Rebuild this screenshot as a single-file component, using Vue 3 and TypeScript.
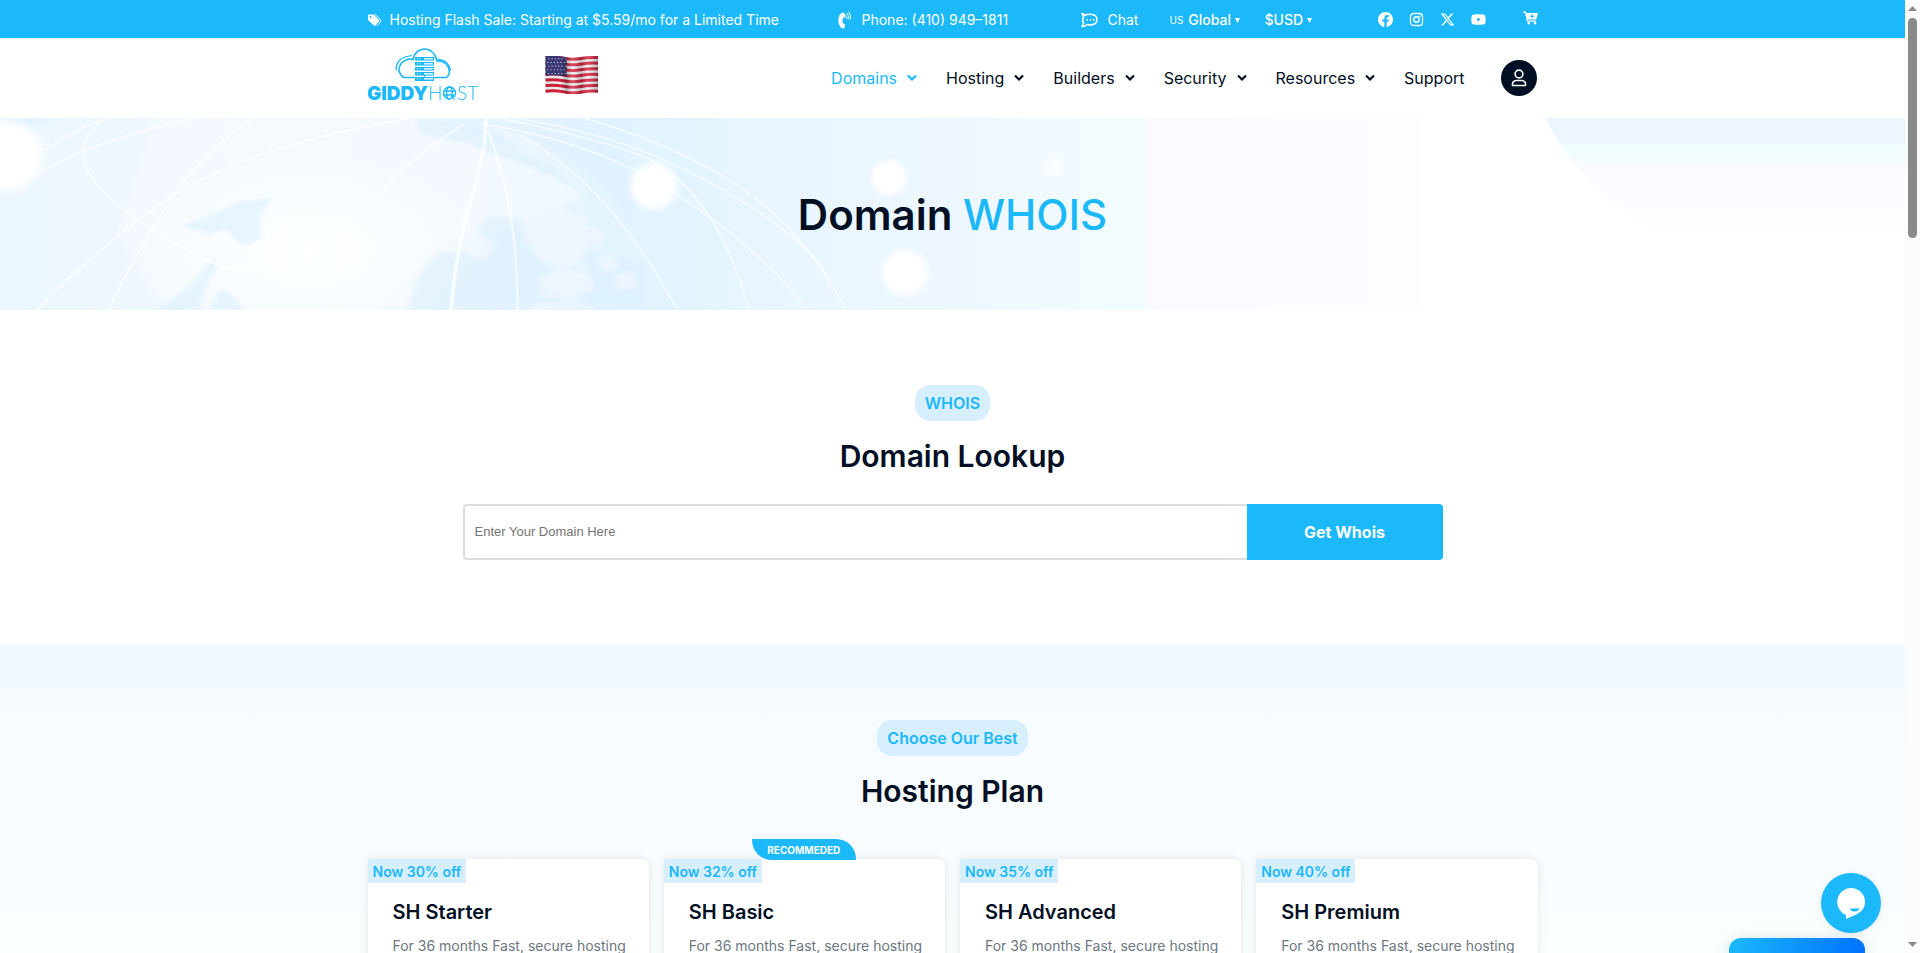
<script setup lang="ts">
import { ref } from 'vue'

interface NavItem { label: string; menu: boolean; active?: boolean }
interface Plan { name: string; off: string; best?: boolean }

const nav: NavItem[] = [
  { label: 'Domains', menu: true, active: true },
  { label: 'Hosting', menu: true },
  { label: 'Builders', menu: true },
  { label: 'Security', menu: true },
  { label: 'Resources', menu: true },
  { label: 'Support', menu: false },
]

const plans: Plan[] = [
  { name: 'SH Starter', off: 'Now 30% off' },
  { name: 'SH Basic', off: 'Now 32% off', best: true },
  { name: 'SH Advanced', off: 'Now 35% off' },
  { name: 'SH Premium', off: 'Now 40% off' },
]

const region = ref('Global')
const currency = ref('$USD')
const domain = ref('')
</script>

<template>
  <div class="shell">
    <div class="page">
      <div class="topbar">
        <div class="container topbar-grid">
          <a class="item sale" href="#sale">
            <svg width="14" height="14" viewBox="0 0 28 28" aria-hidden="true">
              <path fill="#fff" fill-rule="evenodd" d="M1 3h10l11 11q1.500 1.500 0 3l-7 8q-1.500 1.500-3 0L0 14V4zM5 6a2 2 0 1 0 .1 0z" />
              <path d="M14 3l11.500 11q1.500 1.500 0 3L19 24.500" fill="none" stroke="#fff" stroke-width="2" stroke-linecap="round" />
            </svg>
            Hosting Flash Sale: Starting at $5.59/mo for a Limited Time
          </a>
          <a class="item phone" href="tel:+14109491811">
            <svg width="14" height="18" viewBox="0 0 28 36" fill="none" stroke="#fff" aria-hidden="true">
              <path fill="#fff" stroke="none" d="M9 3l4 1 1 8-4 2q-2 6 0 11l4 1-1 8-4 1q-5-2-7.500-9.500-2.500-10 2-18.500z" />
              <path stroke-width="2" stroke-linecap="round" d="M15 8q3 2.500 1 6M18.500 5q4.500 4.500 1.500 10.500M22 2q6 6.500 2 15" />
            </svg>
            Phone: (410) 949–1811
          </a>
          <a class="item chat" href="#chat">
            <svg width="17" height="17" viewBox="0 0 34 34" fill="none" stroke="#fff" aria-hidden="true">
              <path stroke-width="3" stroke-linejoin="round" d="M2 3q3 1 5 4Q12 4 19 4.500q13 1 13 10.500 0 10-13 11-4 0-7-1-4 4-10 4.500Q5 25 5 21q-3-5 0-10Q4 7 2 3z" />
              <path stroke-width="3.500" stroke-linecap="round" d="M12.500 15.500h.1M19 15.500h.1M25.500 15.500h.1" />
            </svg>
            Chat
          </a>
          <label class="pick">
            <span class="code">US</span>
            <select v-model="region" aria-label="Region"><option>Global</option></select>
            <svg width="5" height="5" viewBox="0 0 5 5" aria-hidden="true"><path fill="#fff" d="M0 0h5L2.500 5z" /></svg>
          </label>
          <label class="pick">
            <select v-model="currency" aria-label="Currency"><option>$USD</option></select>
            <svg width="5" height="5" viewBox="0 0 5 5" aria-hidden="true"><path fill="#fff" d="M0 0h5L2.500 5z" /></svg>
          </label>
          <div class="social">
            <a href="#facebook" aria-label="Facebook">
              <svg width="15" height="15" viewBox="0 0 16 16"><path fill="#fff" d="M16 8.049c0-4.446-3.582-8.050-8-8.050C3.580 0-.002 3.603-.002 8.050c0 4.017 2.926 7.347 6.750 7.951v-5.625h-2.030V8.050H6.750V6.275c0-2.017 1.195-3.131 3.022-3.131.876 0 1.791.157 1.791.157v1.980h-1.009c-.993 0-1.303.621-1.303 1.258v1.510h2.218l-.354 2.326H9.250V16c3.824-.604 6.750-3.934 6.750-7.951" /></svg>
            </a>
            <a href="#instagram" aria-label="Instagram">
              <svg width="15" height="15" viewBox="0 0 30 30" fill="none" stroke="#fff" stroke-width="2.600"><rect x="3" y="3" width="24" height="24" rx="6.500" /><circle cx="15" cy="15" r="5.500" /><circle cx="21.600" cy="8.600" r="1.400" fill="#fff" stroke="none" /></svg>
            </a>
            <a href="#x" aria-label="X">
              <svg width="15" height="15" viewBox="0 0 512 512"><path fill="#fff" d="M389.200 48h70.600L305.600 224.200 487 464H345L233.700 318.600 106.500 464H35.800L200.700 275.500 26.800 48H172.400L272.900 180.900 389.200 48zM364.400 421.800h39.100L151.100 88h-42L364.400 421.800z" /></svg>
            </a>
            <a href="#youtube" aria-label="YouTube">
              <svg width="15" height="15" viewBox="0 0 30 30"><path fill="#fff" fill-rule="evenodd" d="M5 5q10-1.500 20 0 4 .5 4 4.500.6 5.500 0 11 0 4-4 4.500-10 1-20 0-4-.5-4-4.500-.6-5.500 0-11Q1 5.500 5 5zM12.500 11v8l7-4z" /></svg>
            </a>
          </div>
          <a class="cart" href="#cart" aria-label="Cart">
            <svg width="15" height="14" viewBox="0 0 30 28">
              <path d="M0 2h5l4 18h17" fill="none" stroke="#fff" stroke-width="2.500" />
              <path fill="#fff" fill-rule="evenodd" d="M6.500 4H30l-3.500 13H9zM17 6v3.500h-3.500v2H17V15h2v-3.500h3.500v-2H19V6z" />
              <circle cx="11.500" cy="24.500" r="2.500" fill="#fff" /><circle cx="24" cy="24.500" r="2.500" fill="#fff" />
            </svg>
          </a>
        </div>
      </div>

      <header class="container header">
        <a class="logo" href="#home" aria-label="GiddyHost">
          <svg width="112" height="60" viewBox="0 0 112 60">
            <g fill="none" stroke="#1bb8fa" stroke-width="1.600">
              <path d="M47 29.500H36q-4-2-5-7 0-7 6-10 4-2 8-1Q47 2 56 1q10 0 13 12 6-1 10 4 3 4 2 9-1 3-3 3.500H66" />
              <path d="M28 22.500q0-12 11-14l5-1M69.500 11q12 1 13 12" stroke-width="1.200" />
              <path d="M56.500 26v5.500M47 32.500h19" stroke-width="1" />
            </g>
            <g v-for="n in 5" :key="n" :transform="`translate(47 ${n * 5 + 4})`">
              <rect width="19" height="3.600" fill="#1bb8fa" />
              <rect x="9" y="1" width="9" height="1.600" fill="#d9f1fe" />
              <circle cx="2.500" cy="1.800" r=".6" fill="#fff" /><circle cx="5" cy="1.800" r=".6" fill="#fff" />
            </g>
            <text class="logo-heavy" x="-1" y="52">GIDDY</text>
            <text class="logo-light" x="60" y="52">H</text>
            <text class="logo-light" x="89" y="52">ST</text>
            <g fill="none" stroke="#1bb8fa" stroke-width="1.300">
              <circle cx="81.500" cy="45" r="6" /><ellipse cx="81.500" cy="45" rx="2.800" ry="6" /><path d="M75.500 43h12M75.500 47h12" />
            </g>
            <path d="M82 44.500l6.500 4-2.700.8 1.600 2.700-1.500.4-1.400-2.400-1.800 1.600z" fill="#1bb8fa" stroke="#fff" stroke-width=".5" />
          </svg>
        </a>
        <svg class="flag" width="54" height="38" viewBox="0 0 54 38" role="img" aria-label="United States">
          <defs>
            <linearGradient id="fold" x2="1">
              <stop offset="0" stop-color="#000" stop-opacity=".08" />
              <stop offset=".28" stop-color="#000" stop-opacity="0" />
              <stop offset=".4" stop-color="#000" stop-opacity=".25" />
              <stop offset=".52" stop-color="#fff" stop-opacity=".2" />
              <stop offset=".68" stop-color="#000" stop-opacity=".2" />
              <stop offset=".8" stop-color="#fff" stop-opacity=".15" />
              <stop offset="1" stop-color="#000" stop-opacity=".28" />
            </linearGradient>
          </defs>
          <path fill="#f2f2f4" d="M.5 1q9-1 18 .5t17 .5 17.500-1L53 36q-8-1.500-16 .5t-18 0-18.500 0z" />
          <path v-for="n in 7" :key="n" :transform="`translate(0 ${n * 5.600 - 4})`" d="M.5 0q9-1 18 .7t17 .3 17.500-1" fill="none" stroke="#d5213c" stroke-width="3" />
          <path fill="#3c3b78" d="M.5 0q10-1 21 1.500v19q-11-2-21-1z" />
          <g fill="#fff">
            <template v-for="r in 5" :key="r">
              <circle v-for="c in 6" :key="c" :cx="c * 3.300 - 0.500 + (r % 2)" :cy="r * 3.700 - 1" r=".55" />
            </template>
          </g>
          <path fill="url(#fold)" d="M.5 0q9-1 18 .5t17 .5 17.500-1L53 37q-8-1.500-16 .5t-18 0-18.500 0z" />
        </svg>
        <nav class="nav" aria-label="Main">
          <a v-for="item in nav" :key="item.label" :href="'#' + item.label.toLowerCase()" :class="{ active: item.active }">
            {{ item.label }}
            <svg v-if="item.menu" width="10" height="8" viewBox="0 0 10 8" aria-hidden="true"><path d="M1 1.500l4 4 4-4" fill="none" stroke="currentColor" stroke-width="2.200" /></svg>
          </a>
        </nav>
        <a class="account" href="#account" aria-label="Account">
          <svg width="16" height="18" viewBox="0 0 16 18" fill="none" stroke="#fff" stroke-width="1.600" stroke-linejoin="round"><circle cx="8" cy="5" r="3.900" /><path d="M1.500 16.500q-.5-4.800 4-5h5q4.500.2 4 5z" /></svg>
        </a>
      </header>

      <section class="hero">
        <svg class="hero-art" viewBox="0 0 1905 192" preserveAspectRatio="none" aria-hidden="true">
          <defs>
            <linearGradient id="sky" x2="1">
              <stop offset="0" stop-color="#ebf6fe" /><stop offset=".06" stop-color="#eff7fe" />
              <stop offset=".15" stop-color="#f2f9fe" />
              <stop offset=".25" stop-color="#eff7fe" /><stop offset=".32" stop-color="#e3f4ff" />
              <stop offset=".36" stop-color="#e2f4ff" /><stop offset=".4" stop-color="#e8f5ff" />
              <stop offset=".5" stop-color="#eef7ff" /><stop offset=".58" stop-color="#f2fbfd" />
              <stop offset=".6" stop-color="#f3fcfd" /><stop offset=".602" stop-color="#f8faff" />
              <stop offset=".66" stop-color="#fbfcff" /><stop offset=".745" stop-color="#fcfdff" />
              <stop offset=".747" stop-color="#fff" />
            </linearGradient>
            <linearGradient id="corner" x2="0" y2="1">
              <stop offset="0" stop-color="#edf5fe" /><stop offset=".22" stop-color="#edf6fe" />
              <stop offset=".26" stop-color="#f0fcfd" /><stop offset=".38" stop-color="#f2fcfd" />
              <stop offset=".42" stop-color="#f8faff" /><stop offset=".54" stop-color="#fbfcff" />
              <stop offset="1" stop-color="#fcfdff" />
            </linearGradient>
            <radialGradient id="glow"><stop offset=".65" stop-color="#fff" /><stop offset="1" stop-color="#fff" stop-opacity="0" /></radialGradient>
            <radialGradient id="haze"><stop offset="0" stop-color="#fff" /><stop offset=".4" stop-color="#fbfeff" stop-opacity=".9" /><stop offset="1" stop-color="#f9fdff" stop-opacity="0" /></radialGradient>
            <filter id="soft"><feGaussianBlur stdDeviation="5" /></filter>
          </defs>
          <rect width="1905" height="192" fill="url(#sky)" />
          <g transform="scale(.40816 .33333) translate(0 -24)">
            <path d="M1150 24q300 110 400 330V24z" fill="#dff2ff" opacity=".6" filter="url(#soft)" />
            <path d="M380 24H1020l260 90 150 150-120 60-330 120-50 155H560l-180-40-90-190z" fill="#f6fbfe" opacity=".6" filter="url(#soft)" />
            <ellipse cx="760" cy="420" rx="440" ry="300" fill="url(#haze)" />
            <g fill="#dbf0ff" opacity=".6" filter="url(#soft)">
              <path d="M1020 30H1180l110 100q70 40 120 110-60-50-150-85-60-20-110-55l-60-10-60-20z" />
              <path d="M445 350l70-35 70-40 85-12-30 50-5 40 10 30-50 28-40-50-40 10z" />
              <path d="M385 600l50-45q40-30 55-65l35-50 5 40-30 60-10 60z" />
              <path d="M515 600l20-60 25 5 45 55z" />
              <path d="M1000 600l15-70q20-70 70-105l55 5 45 20 30-45-45-40 20-45h80l35 80q10 60 60 80l55 5-80 20-20 50 90 25 40-80-15-80 150 40V600z" />
              <path d="M0 24h130L80 50H40z" />
            </g>
            <g fill="#f0f7fe" opacity=".8" filter="url(#soft)">
              <path d="M1290 320l50-40 90 40 20 80-50 70-70-20-45-60zM1320 500l70-25 60 30 5 40-70 10-60-20zM1460 450l40-20 20 40-40 20zM1430 340l50 30-10 40-30-10zM1290 600l40-25 110 5 20 20zM1500 500l50-20 15 50-50 10z" />
            </g>
            <g fill="none" stroke="#fff" stroke-opacity=".7" stroke-width="5">
              <path d="M260 24Q180 90 215 185 270 290 420 395T620 485" />
              <path d="M110 120Q180 60 250 30M85 195Q230 90 480 24" />
              <path d="M620 24Q510 110 430 250T265 600" />
              <path d="M90 600Q250 400 430 250 640 100 1000 26" />
              <path d="M1190 24q0 110-35 240t-50 336" stroke-width="9" />
              <path d="M1195 60q75 240 73 540" />
              <path d="M940 240Q1020 130 1140 40" />
              <path d="M1170 40Q1450 90 1640 240 1850 400 1980 600" stroke-width="4" />
              <path d="M1270 70Q1450 200 1570 420 1620 510 1660 600" stroke-width="4" />
              <path d="M1220 24Q1450 80 1590 145 1760 260 1835 600" stroke-width="4" />
              <path d="M1430 24Q1760 140 1920 340 2030 480 2070 600" stroke-width="4" />
              <path d="M1280 28Q1560 80 1800 260T2030 540" stroke-width="4" />
            </g>
          </g>
          <g fill="url(#glow)">
            <ellipse cx="8" cy="38" rx="42" ry="42" /><circle cx="654" cy="68" r="28" />
            <ellipse cx="889" cy="60" rx="21" ry="21" /><circle cx="905" cy="155" r="27" />
          </g>
          <circle cx="1054" cy="49" r="16" fill="url(#haze)" opacity=".7" /><circle cx="311" cy="133" r="34" fill="url(#haze)" />
          <path d="M1546 0H1905V109H1652Q1577 70 1546 0z" fill="url(#corner)" />
        </svg>
        <h1>Domain <span>WHOIS</span></h1>
      </section>

      <section class="lookup">
        <p class="pill">WHOIS</p>
        <h2>Domain Lookup</h2>
        <form class="search" @submit.prevent>
          <input v-model="domain" type="text" placeholder="Enter Your Domain Here" aria-label="Domain name">
          <button type="submit">Get Whois</button>
        </form>
      </section>

      <section class="plans">
        <p class="pill">Choose Our Best</p>
        <h2>Hosting Plan</h2>
        <div class="container cards">
          <article v-for="plan in plans" :key="plan.name" class="card">
            <span v-if="plan.best" class="ribbon">RECOMMEDED</span>
            <span class="off">{{ plan.off }}</span>
            <h3>{{ plan.name }}</h3>
            <p>For 36 months Fast, secure hosting</p>
          </article>
        </div>
      </section>

      <button class="widget" type="button" aria-label="Open chat">
        <svg width="28" height="31" viewBox="0 0 28 31"><path fill="#fff" d="M14 0a14 14 0 0 1 14 14c0 7-5 11-10 13l-9 4v-4A14 14 0 0 1 14 0z" /><path d="M13 20.500h9.500q-1 3-5 3t-4.500-3z" fill="#1bb8fa" /></svg>
      </button>
      <div class="promo"></div>
    </div>

    <div class="scroll" aria-hidden="true">
      <svg width="9" height="5" viewBox="0 0 9 5"><path fill="#8a8a8a" d="M0 5h9L4.500 0z" /></svg>
      <div class="track"><div class="thumb"></div></div>
      <svg width="9" height="5" viewBox="0 0 9 5"><path fill="#8a8a8a" d="M0 0h9L4.500 5z" /></svg>
    </div>
  </div>
</template>

<style>
body { margin: 0; overflow: hidden; }
</style>

<style scoped>
* { box-sizing: border-box; }
.shell {
  display: flex;
  height: 100vh;
  overflow: hidden;
  background: #fff;
  color: #010f24;
  font-family: Inter, "Open Sans", sans-serif;
  font-size: 16px;
}
.page { flex: 1; min-width: 0; position: relative; overflow: hidden; display: flex; flex-direction: column; }
.page > * { flex-shrink: 0; }
a { color: inherit; text-decoration: none; }
svg { display: block; flex-shrink: 0; }
h1, h2, h3, p { margin: 0; }
.container { width: 100%; max-width: 1170px; margin: 0 auto; }

.topbar { background: #1bb8fa; color: #fff; font-size: 14px; }
.topbar-grid {
  display: grid;
  grid-template-columns: 470fr 243fr 89fr 95fr 113fr 145fr 15fr;
  align-items: center;
  height: 38px;
  white-space: nowrap;
}
.item { display: flex; align-items: center; gap: 8px; line-height: 20px; padding-top: 2px; }
.phone, .chat { gap: 10px; }
.pick { display: flex; align-items: center; gap: 4px; padding-top: 2px; }
.code { font-size: 10px; margin-right: 1px; }
.pick select {
  appearance: none;
  field-sizing: content;
  border: 0;
  padding: 0;
  background: transparent;
  color: #fff;
  font: 500 14px/20px Inter, sans-serif;
}
.social { display: flex; gap: 16px; }
.cart { align-self: start; padding-top: 11px; }

.header { display: flex; align-items: center; height: 80px; padding-right: 1px; }
.logo { align-self: start; padding-top: 10px; }
.logo-heavy { font: 900 19px Inter, sans-serif; fill: #1bb8fa; }
.logo-light { font: 300 19px Lato, sans-serif; fill: #1bb8fa; }
.flag { margin: 0 0 7px 65px; }
.nav { display: flex; gap: 29px; margin-left: auto; line-height: 24px; }
.nav a { display: flex; align-items: center; gap: 10px; }
.nav .active { color: #1bb8fa; }
.account {
  display: grid;
  place-items: center;
  width: 36px;
  height: 36px;
  margin-left: 36px;
  border-radius: 50%;
  background: #010f24;
}

.hero { position: relative; display: grid; place-items: center; height: 192px; }
.hero-art { position: absolute; inset: 0; width: 100%; height: 100%; }
h1 { position: relative; font-size: 42px; line-height: 56px; font-weight: 600; padding-top: 2px; }
h1 span { color: #1bb8fa; font-weight: 500; }

.lookup, .plans { display: flex; flex-direction: column; align-items: center; padding-top: 75px; }
.lookup { padding-bottom: 85px; }
.pill {
  padding: 0 10px;
  border-radius: 15px;
  background: #d7eefd;
  color: #1bb8fa;
  font-size: 16px;
  line-height: 36px;
  font-weight: 600;
}
h2 { margin-top: 16px; font-size: 30px; line-height: 38px; font-weight: 600; }
.search { display: flex; width: 980px; max-width: 100%; height: 56px; margin-top: 29px; }
.search input {
  flex: 1;
  min-width: 0;
  padding: 0 10px 2px;
  border: 2px solid #ddd;
  border-right: 0;
  border-radius: 4px 0 0 4px;
  font: 13px "Liberation Sans", sans-serif;
  color: #010f24;
}
.search input::placeholder { color: #757575; }
.search button {
  width: 20%;
  border: 0;
  border-radius: 0 4px 4px 0;
  background: #1bb8fa;
  color: #fff;
  font: 700 16px Inter, sans-serif;
}

.plans { flex: 1 0 auto; background: linear-gradient(#f1faff, #f5fbff 60px, #f8fcff 200px, #f9ffff 300px); }
.cards { display: grid; grid-template-columns: repeat(4, 1fr); gap: 15px; margin-top: 49px; }
.card {
  position: relative;
  border-radius: 0 8px 8px 8px;
  background: #fff;
  box-shadow: 0 0 8px rgba(0, 0, 0, .1);
  height: 300px;
}
.off {
  display: block;
  width: fit-content;
  padding: 1px 5px 0;
  background: #d7eefd;
  color: #1bb8fa;
  font-size: 14px;
  line-height: 23px;
  font-weight: 600;
}
.ribbon {
  position: absolute;
  left: 88px;
  top: -20px;
  width: 104px;
  padding-top: 1px;
  border-radius: 0 20px 0 20px;
  background: #1bb8fa;
  color: #fff;
  font-size: 10px;
  line-height: 20px;
  font-weight: 700;
  text-align: center;
}
h3 { margin: 16px 25px 0; font-size: 20px; line-height: 26px; font-weight: 600; }
.card p { margin: 9px 15px 0 25px; color: #6c7883; font-size: 14px; line-height: 24px; }

.widget {
  position: absolute;
  right: 24px;
  bottom: 20px;
  display: grid;
  place-items: center;
  width: 60px;
  height: 60px;
  border: 0;
  border-radius: 50%;
  background: #1bb8fa;
  box-shadow: 0 1px 6px rgba(0, 0, 0, .1);
}
.promo {
  position: absolute;
  right: 40px;
  bottom: 0;
  width: 136px;
  height: 15px;
  border-radius: 12px 12px 0 0;
  background: linear-gradient(100deg, #1bb8fa, #0072ff);
  box-shadow: 0 4px 15px rgba(0, 0, 0, .2);
}
.scroll {
  display: flex;
  flex-direction: column;
  align-items: center;
  width: 15px;
  padding: 6px 0;
  background: #fcfcfc;
}
.track { flex: 1; padding: 7px 0; }
.thumb { width: 9px; height: 24%; min-height: 20px; border-radius: 5px; background: #8a8a8a; }
</style>
